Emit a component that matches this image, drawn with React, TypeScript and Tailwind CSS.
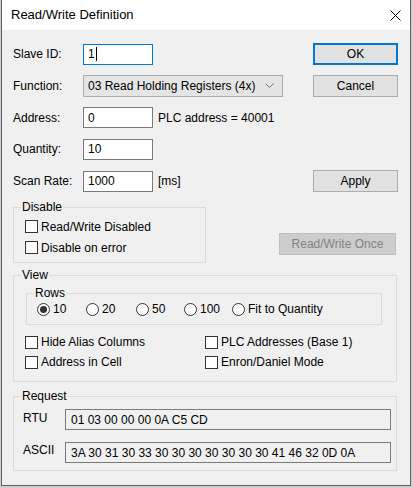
import React from 'react';

const font = { fontFamily: '"Liberation Sans", Arial, sans-serif' };

const Box: React.FC<{ value: string; focused?: boolean }> = ({ value, focused }) => (
  <div
    className={`w-[70px] h-[21px] bg-white border flex items-center pl-[4px] text-black ${
      focused ? 'border-[#0078d7]' : 'border-[#7a7a7a]'
    }`}
  >
    <span>{value}</span>
    {focused && <span className="w-[1px] h-[14px] bg-black ml-[1px]"></span>}
  </div>
);

const Button: React.FC<{ label: string; primary?: boolean; disabled?: boolean; className?: string }> = ({
  label,
  primary,
  disabled,
  className = '',
}) => (
  <div
    className={`h-[22px] flex items-center justify-center ${
      disabled
        ? 'bg-[#cccccc] border border-[#bfbfbf] text-[#838383]'
        : primary
        ? 'bg-[#e1e1e1] border-2 border-[#0078d7] text-black'
        : 'bg-[#e1e1e1] border border-[#adadad] text-black'
    } ${className}`}
  >
    {label}
  </div>
);

const Check: React.FC<{ label: string }> = ({ label }) => (
  <div className="flex items-center h-full">
    <span className="w-[13px] h-[13px] border border-[#333333] bg-white"></span>
    <span className="ml-[3px]">{label}</span>
  </div>
);

const Radio: React.FC<{ label: string; checked?: boolean; className?: string }> = ({ label, checked, className = '' }) => (
  <div className={`flex items-center ${className}`}>
    <span className="w-[13px] h-[13px] rounded-full border border-[#333333] bg-white flex items-center justify-center">
      {checked && <span className="w-[7px] h-[7px] rounded-full bg-[#333333]"></span>}
    </span>
    <span className="ml-[3px]">{label}</span>
  </div>
);

// legend sits at the fieldset's padding edge, so legendClass pulls it back
const Group: React.FC<{ title: string; className?: string; legendClass?: string; children: React.ReactNode }> = ({
  title,
  className = '',
  legendClass = '',
  children,
}) => (
  <fieldset className={`border border-[#dcdcdc] ${className}`}>
    <legend className={`px-[1px] leading-[14px] ${legendClass}`}>{title}</legend>
    {children}
  </fieldset>
);

export default function App() {
  return (
    <div className="min-h-screen bg-[#cfcfcf] text-[12px] leading-[14px] text-black" style={font}>
      <div className="ml-[1px] w-[410px] h-[486px] bg-[#f0f0f0] border-x border-b border-[#5f5f5f] flex flex-col">
        {/* title bar */}
        <div className="h-[30px] bg-white flex items-center justify-between pl-[9px] pr-[9px] shrink-0">
          <span className="text-[13px]">Read/Write Definition</span>
          <svg width="11" height="11" viewBox="0 0 11 11">
            <path d="M0.5 0.5 L10.5 10.5 M10.5 0.5 L0.5 10.5" stroke="#000" strokeWidth="1" />
          </svg>
        </div>

        <div className="flex flex-col pl-[11px] pr-[12px] pt-[13px]">
          {/* form rows */}
          <div className="flex flex-col gap-[9.75px]">
            <div className="flex items-center h-[22px]">
              <span className="w-[70px]">Slave ID:</span>
              <Box value="1" focused />
              <Button label="OK" primary className="ml-auto w-[85px]" />
            </div>
            <div className="flex items-center h-[22px]">
              <span className="w-[70px]">Function:</span>
              <div className="w-[200px] h-[22px] bg-[#e5e5e5] border border-[#adadad] flex items-center pl-[4px] pr-[8px]">
                <span>03 Read Holding Registers (4x)</span>
                <svg className="ml-auto" width="9" height="6" viewBox="0 0 9 6">
                  <path d="M0.5 0.5 L4.5 4.5 L8.5 0.5" stroke="#707070" strokeWidth="1" fill="none" />
                </svg>
              </div>
              <Button label="Cancel" className="ml-auto w-[85px]" />
            </div>
            <div className="flex items-center h-[22px]">
              <span className="w-[70px]">Address:</span>
              <Box value="0" />
              <span className="ml-[5px]">PLC address = 40001</span>
            </div>
            <div className="flex items-center h-[22px]">
              <span className="w-[70px]">Quantity:</span>
              <Box value="10" />
            </div>
            <div className="flex items-center h-[22px]">
              <span className="w-[70px]">Scan Rate:</span>
              <Box value="1000" />
              <span className="ml-[5px]">[ms]</span>
              <Button label="Apply" className="ml-auto w-[85px]" />
            </div>
          </div>

          {/* disable */}
          <div className="flex mt-[8px]">
            <Group title="Disable" legendClass="ml-[-4px]" className="w-[193px] pl-[11px] pt-[2px] pb-[4px]">
              <div className="h-[21px]">
                <Check label="Read/Write Disabled" />
              </div>
              <div className="h-[21px]">
                <Check label="Disable on error" />
              </div>
            </Group>
            <Button label="Read/Write Once" disabled className="ml-auto self-end mb-[8px] mr-[2px] w-[117px]" />
          </div>

          {/* view */}
          <Group title="View" legendClass="ml-[-4px]" className="mt-[5px] w-[384px] pl-[11px] pb-[9px]">
            <Group title="Rows" legendClass="ml-[-3px]" className="mt-[4px] ml-[1px] w-[356px] pl-[10px] pb-[6px]">
              <div className="flex items-center h-[18px]">
                <Radio label="10" checked className="w-[49px]" />
                <Radio label="20" className="w-[50px]" />
                <Radio label="50" className="w-[48px]" />
                <Radio label="100" className="w-[48px]" />
                <Radio label="Fit to Quantity" />
              </div>
            </Group>
            <div className="grid grid-cols-[180px_1fr] mt-[7px]">
              <div className="h-[20px]">
                <Check label="Hide Alias Columns" />
              </div>
              <div className="h-[20px]">
                <Check label="PLC Addresses (Base 1)" />
              </div>
              <div className="h-[20px]">
                <Check label="Address in Cell" />
              </div>
              <div className="h-[20px]">
                <Check label="Enron/Daniel Mode" />
              </div>
            </div>
          </Group>

          {/* request */}
          <Group title="Request" legendClass="ml-[-2px]" className="mt-[7px] w-[384px] pl-[9px] pb-[7px]">
            <div className="flex flex-col gap-[12px] mt-[6px]">
              <div className="flex items-start">
                <span className="w-[42px] pt-[2px]">RTU</span>
                <div className="w-[326px] h-[21px] border border-[#7a7a7a] bg-[#f0f0f0] flex items-center pl-[5px]">
                  01 03 00 00 00 0A C5 CD
                </div>
              </div>
              <div className="flex items-start">
                <span className="w-[42px] pt-[1px]">ASCII</span>
                <div className="w-[326px] h-[21px] border border-[#7a7a7a] bg-[#f0f0f0] flex items-center pl-[5px]">
                  3A 30 31 30 33 30 30 30 30 30 30 30 41 46 32 0D 0A
                </div>
              </div>
            </div>
          </Group>
        </div>
      </div>
    </div>
  );
}
